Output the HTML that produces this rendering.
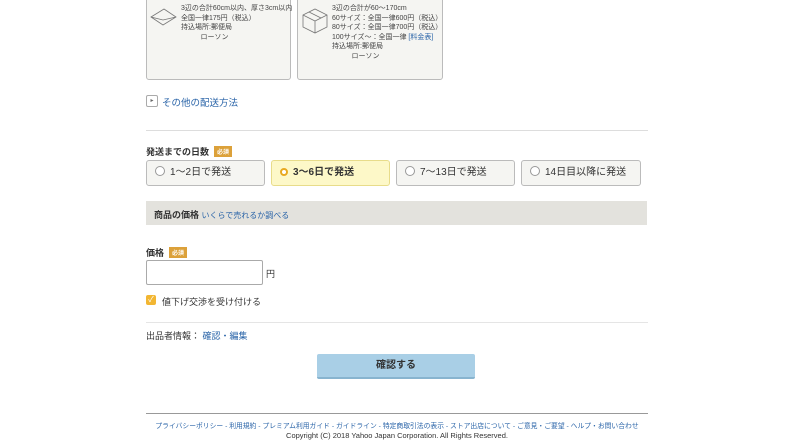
<!DOCTYPE html>
<html><head><meta charset="utf-8"><style>
body{margin:0;width:800px;height:448px;background:#fff;position:relative;overflow:hidden;font-family:"Liberation Sans","Noto Sans CJK JP",sans-serif;color:#333}
.a{position:absolute;white-space:nowrap}
.box{position:absolute;border:1px solid #bbb;border-radius:3px;background:#f5f5f2}
.s{font-size:7px;line-height:9.5px;color:#444}
.req{display:inline-block;background:#dca13a;color:#fff;font-size:6px;padding:1px 3px;vertical-align:1px;margin-left:5px}
.r{position:absolute;top:160px;height:24px;width:117px;border:1px solid #bbb;border-radius:3px;background:#f5f5f2;font-size:10px;line-height:24px}
.r i{display:inline-block;width:8px;height:8px;border:1px solid #999;border-radius:50%;background:#fff;margin:0 5px 0 8px;vertical-align:-1px}
.blue{color:#2a64a8}
</style></head><body>
<div class="box" style="left:146px;top:-4px;width:143px;height:82px"></div>
<div class="box" style="left:297px;top:-4px;width:144px;height:82px"></div>
<svg class="a" style="left:149px;top:6px" width="30" height="22"><path d="M2 11 L15 3 L27 11 L14 19 Z M2 11 L14 14 L27 11" fill="none" stroke="#777" stroke-width="0.8"/></svg>
<div class="a s" style="left:181px;top:4px">3辺の合計60cm以内、厚さ3cm以内<br>全国一律175円（税込）<br>持込場所:郵便局<br>&nbsp;&nbsp;&nbsp;&nbsp;&nbsp;&nbsp;&nbsp;&nbsp;&nbsp;&nbsp;ローソン</div>
<svg class="a" style="left:301px;top:6px" width="28" height="28"><path d="M2 9 L14 3 L26 9 L26 21 L14 27 L2 21 Z M2 9 L14 15 L26 9 M14 15 L14 27 M8 6 L20 12" fill="none" stroke="#777" stroke-width="0.8"/></svg>
<div class="a s" style="left:332px;top:4px">3辺の合計が60〜170cm<br>60サイズ：全国一律600円（税込）<br>80サイズ：全国一律700円（税込）<br>100サイズ〜：全国一律 <span class="blue">[料金表]</span><br>持込場所:郵便局<br>&nbsp;&nbsp;&nbsp;&nbsp;&nbsp;&nbsp;&nbsp;&nbsp;&nbsp;&nbsp;ローソン</div>
<div class="a" style="left:146px;top:95px;width:10px;height:10px;border:1px solid #aaa;border-radius:2px;font-size:6px;line-height:10px;text-align:center;color:#666">▸</div>
<div class="a blue" style="left:162px;top:95px;font-size:9.5px">その他の配送方法</div>
<div class="a" style="left:146px;top:130px;width:502px;border-top:1px solid #ddd"></div>
<div class="a" style="left:146px;top:145px;font-size:9px;font-weight:bold">発送までの日数<span class="req">必須</span></div>
<div class="r" style="left:146px"><i></i>1〜2日で発送</div>
<div class="r" style="left:271px;background:#fdf8c8;border-color:#e8dc8a;font-weight:bold"><i style="border:2.5px solid #e8a920;width:4px;height:4px"></i>3〜6日で発送</div>
<div class="r" style="left:396px"><i></i>7〜13日で発送</div>
<div class="r" style="left:521px;width:118px"><i></i>14日目以降に発送</div>
<div class="a" style="left:146px;top:201px;width:501px;height:24px;background:#e3e2dd"></div>
<div class="a" style="left:154px;top:208px;font-size:9px;font-weight:bold">商品の価格 <span class="blue" style="font-weight:normal;font-size:8px">いくらで売れるか調べる</span></div>
<div class="a" style="left:146px;top:246px;font-size:9px;font-weight:bold">価格<span class="req">必須</span></div>
<div class="a" style="left:146px;top:260px;width:115px;height:23px;border:1px solid #aaa;border-radius:2px"></div>
<div class="a" style="left:266px;top:267px;font-size:9px">円</div>
<div class="a" style="left:146px;top:295px;width:10px;height:10px;background:#f2b632;border-radius:2px;color:#fff;font-size:8px;line-height:10px;text-align:center">✓</div>
<div class="a" style="left:162px;top:295px;font-size:9px">値下げ交渉を受け付ける</div>
<div class="a" style="left:146px;top:322px;width:502px;border-top:1px solid #e5e5e5"></div>
<div class="a" style="left:146px;top:329px;font-size:9px">出品者情報： <span class="blue">確認・編集</span></div>
<div class="a" style="left:317px;top:354px;width:158px;height:23px;background:#a9cfe6;border-bottom:2px solid #88b4cf;border-radius:2px;text-align:center;line-height:24px;font-size:10px;font-weight:bold">確認する</div>
<div class="a" style="left:146px;top:413px;width:502px;border-top:1px solid #999"></div>
<div class="a blue" style="left:146px;top:420px;width:502px;text-align:center;font-size:6.8px">プライバシーポリシー - 利用規約 - プレミアム利用ガイド - ガイドライン - 特定商取引法の表示 - ストア出店について - ご意見・ご要望 - ヘルプ・お問い合わせ</div>
<div class="a" style="left:146px;top:431px;width:502px;text-align:center;font-size:7.5px">Copyright (C) 2018 Yahoo Japan Corporation. All Rights Reserved.</div>
</body></html>
